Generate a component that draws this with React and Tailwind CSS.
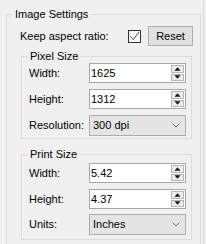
import React from "react";

function Spinner() {
  return (
    <div className="flex w-[15px] flex-col gap-[1px] bg-white p-[1px]">
      <div className="flex flex-1 items-center justify-center border border-[#b5b5b5] bg-[#ececec]">
        <svg width="7" height="4" viewBox="0 0 7 4">
          <path d="M3.5 0.3L6.5 3.7H0.5z" fill="#111" />
        </svg>
      </div>
      <div className="flex flex-1 items-center justify-center border border-[#b5b5b5] bg-[#ececec]">
        <svg width="7" height="4" viewBox="0 0 7 4">
          <path d="M0.5 0.3H6.5L3.5 3.7z" fill="#111" />
        </svg>
      </div>
    </div>
  );
}

function NumberRow({ label, value, className = "" }) {
  return (
    <div className={`flex h-[20px] items-center ${className}`}>
      <span className="w-[60px]">{label}</span>
      <div className="flex h-[20px] w-[97px] border border-[#a6a6a6] bg-white">
        <span className="flex-1 pl-[1px] leading-[18px] text-black">{value}</span>
        <Spinner />
      </div>
    </div>
  );
}

function SelectRow({ label, value, className = "" }) {
  return (
    <div className={`flex h-[21px] items-center ${className}`}>
      <span className="w-[60px]">{label}</span>
      <div className="flex h-[21px] w-[97px] items-center border border-[#adadad] bg-[#e5e5e5] pl-[3px] pr-[5px]">
        <span className="flex-1 leading-[19px]">{value}</span>
        <svg width="8" height="5" viewBox="0 0 8 5">
          <path d="M0.5 0.5L4 4L7.5 0.5" fill="none" stroke="#707070" strokeWidth="1" />
        </svg>
      </div>
    </div>
  );
}

function Group({ title, children, className = "" }) {
  return (
    <fieldset className={`ml-[14px] w-[171px] border border-[#dcdcdc] ${className}`}>
      <legend className="ml-[6px] px-[2px] leading-[14px]">{title}</legend>
      <div className="pl-[7px]">{children}</div>
    </fieldset>
  );
}

export default function App() {
  return (
    <div className="h-[244px] w-[206px] bg-[#f0f0f0] font-['Liberation_Sans',Arial,sans-serif] text-[11px] text-black">
      <div className="h-[244px] w-[204px] border-r border-[#dcdcdc] pt-[7px]">
        <fieldset className="ml-[6px] w-[195px] border border-[#dcdcdc] pb-[4px]">
          <legend className="ml-[6px] px-[2px] leading-[14px]">Image Settings</legend>

          <div className="mt-[5px] flex h-[20px] items-center pl-[13px]">
            <span className="w-[108px]">Keep aspect ratio:</span>
            <div className="h-[13px] w-[13px] border border-[#333] bg-white">
              <svg width="11" height="11" viewBox="0 0 11 11" className="block">
                <path d="M1.2 5.2L4.3 8.6L10 1" fill="none" stroke="#333" strokeWidth="0.9" />
              </svg>
            </div>
            <button className="ml-[7px] h-[20px] w-[45px] border border-[#adadad] bg-[#e1e1e1] leading-[18px]">
              Reset
            </button>
          </div>

          <Group title="Pixel Size" className="mt-[3px] pb-[2px]">
            <NumberRow label="Width:" value="1625" />
            <NumberRow label="Height:" value="1312" className="mt-[6px]" />
            <SelectRow label="Resolution:" value="300 dpi" className="mt-[6px]" />
          </Group>

          <Group title="Print Size" className="mt-[8px] pb-[4px]">
            <NumberRow label="Width:" value="5.42" className="mt-[2px]" />
            <NumberRow label="Height:" value="4.37" className="mt-[6px]" />
            <SelectRow label="Units:" value="Inches" className="mt-[5px]" />
          </Group>
        </fieldset>
      </div>
    </div>
  );
}
